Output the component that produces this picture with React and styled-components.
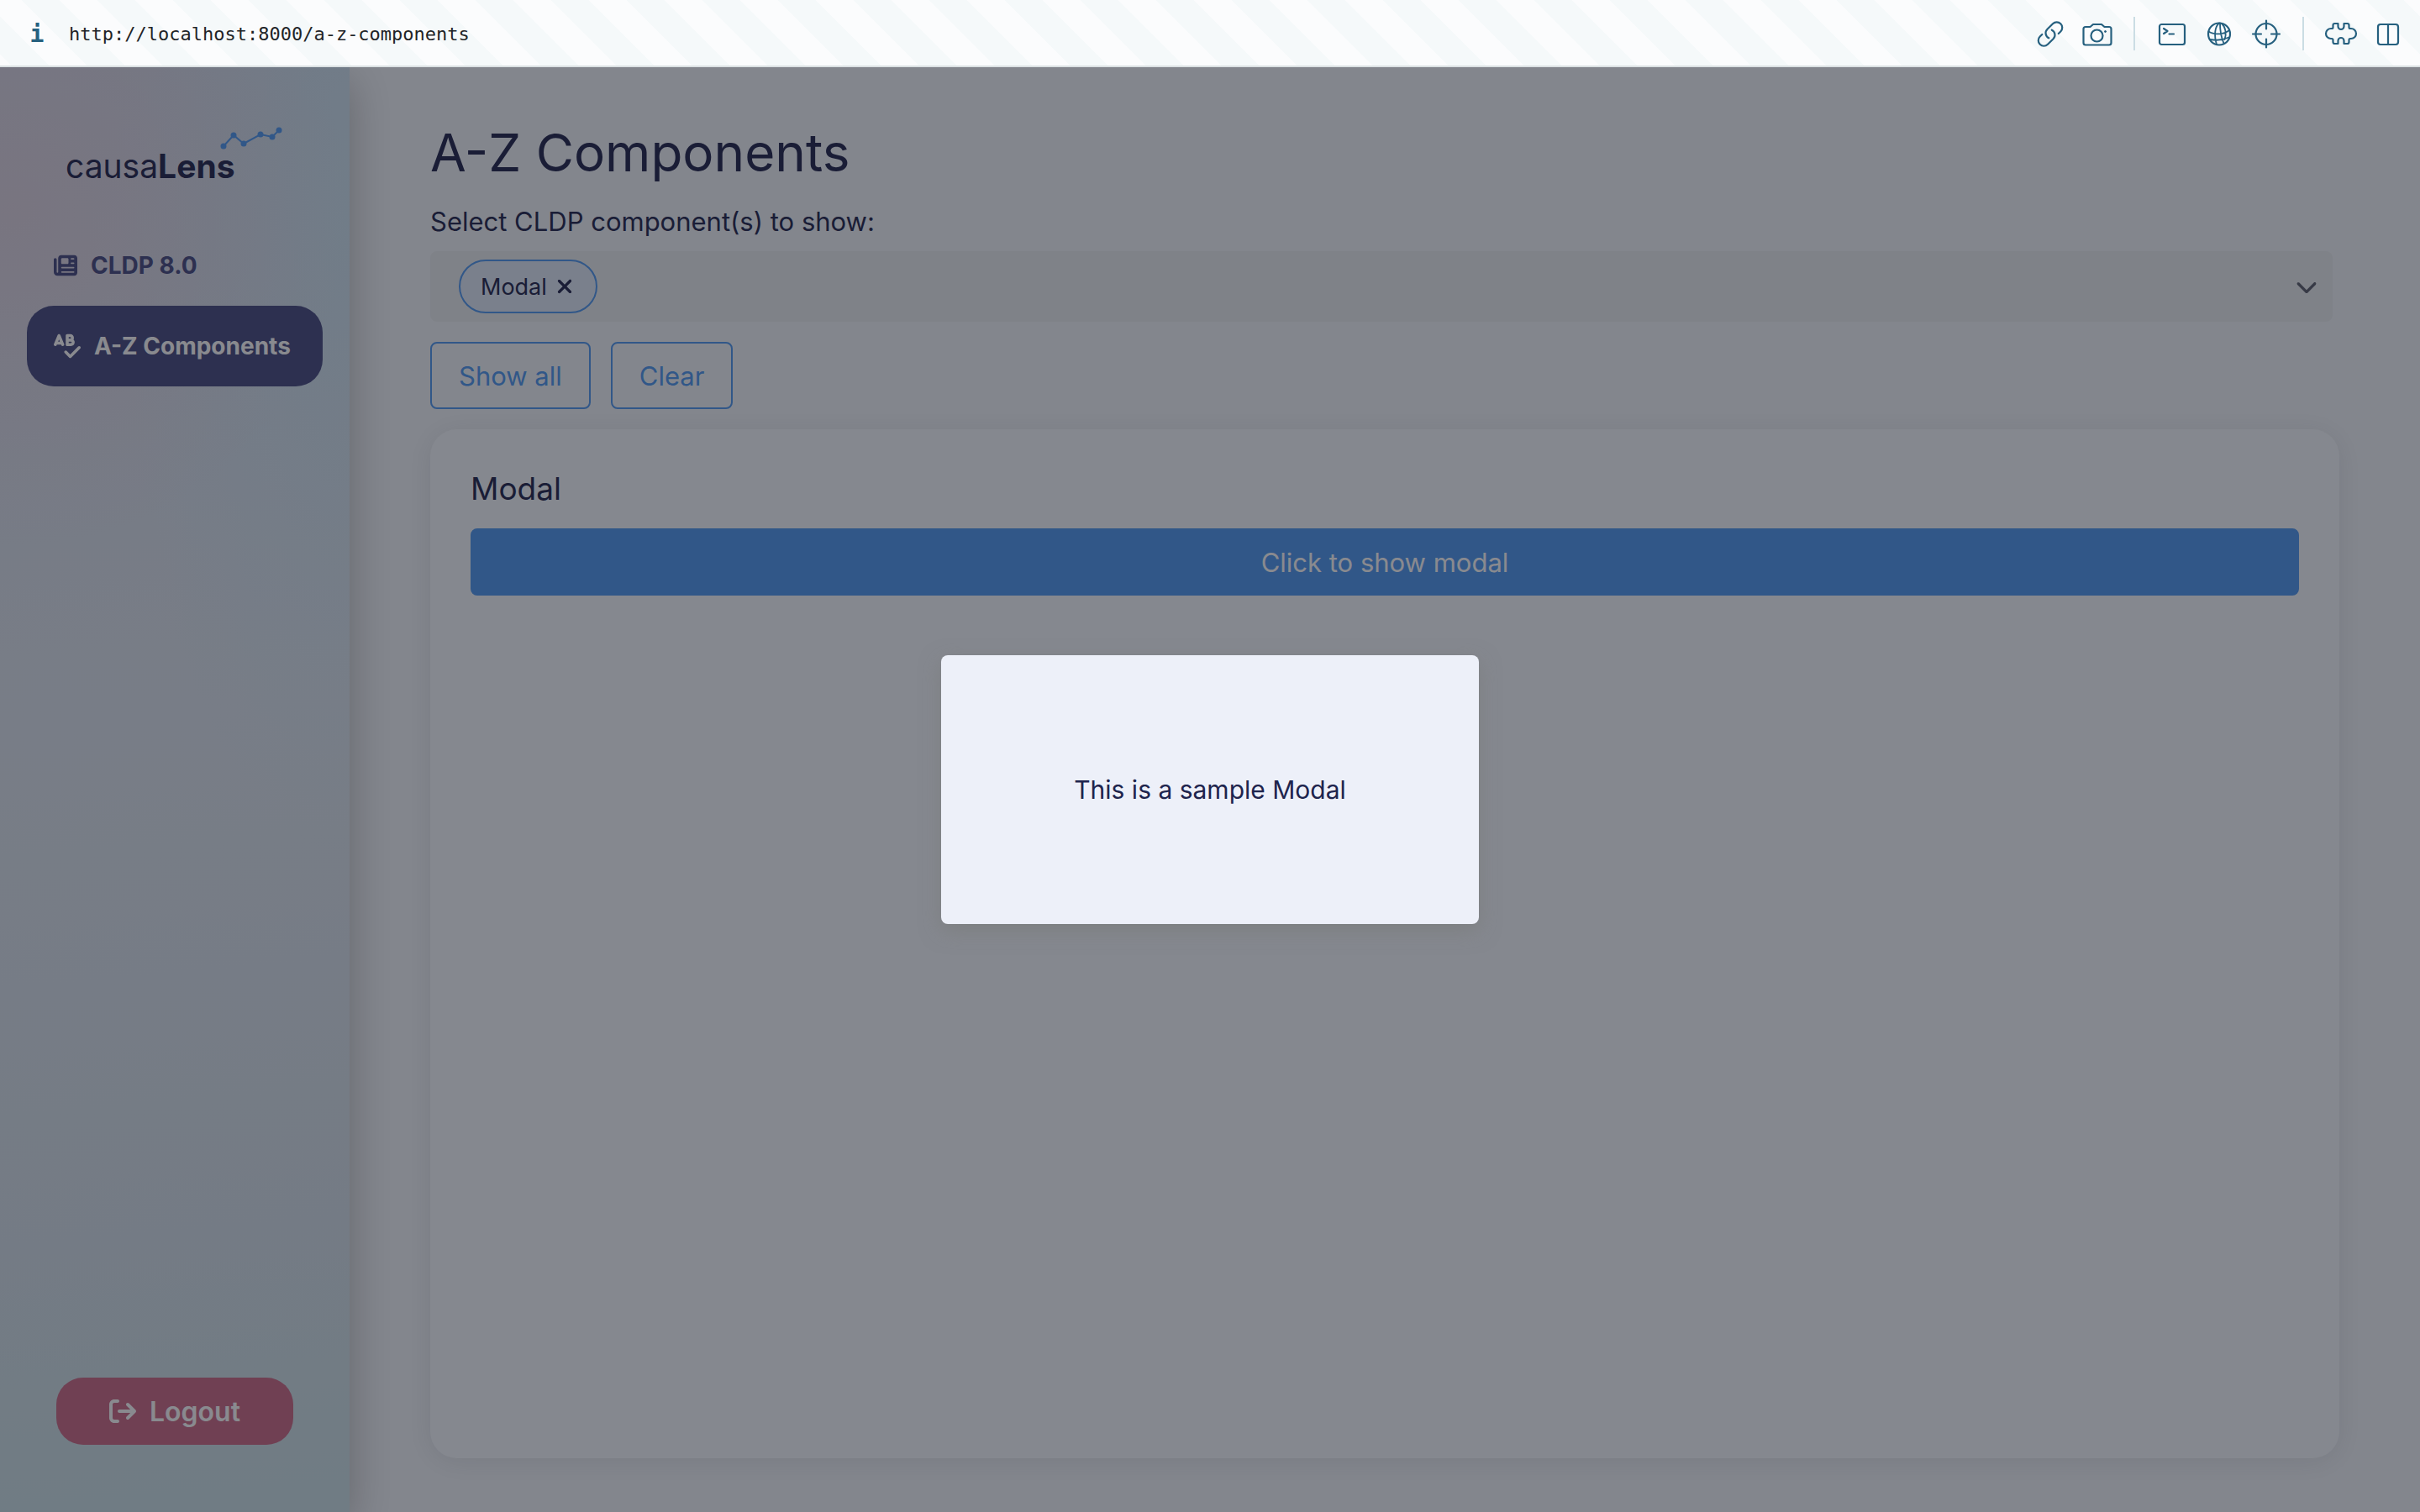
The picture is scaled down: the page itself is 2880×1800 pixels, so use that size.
import React from 'react';
import styled, { createGlobalStyle } from 'styled-components';
import {
  FaArrowRightFromBracket,
  FaChevronDown,
  FaNewspaper,
  FaSpellCheck,
  FaXmark,
} from 'react-icons/fa6';

const color = {
  text: '#20244c',
  modalText: '#1e244d',
  primary: '#4e98f0',
  secondary: '#464a80',
  error: '#cc6a86',
  white: '#ffffff',
  toolbarInk: '#26607f',
};

const GlobalStyle = createGlobalStyle`
  *, *::before, *::after { box-sizing: border-box; }
  body { margin: 0; }
  body, button, input {
    font-family: Inter, "Liberation Sans", sans-serif;
  }
  h1, h2, p { margin: 0; font-weight: 400; }
`;

const Page = styled.div`
  display: flex;
  flex-direction: column;
  min-height: 100vh;
  color: ${color.text};
`;

const Toolbar = styled.header`
  display: flex;
  align-items: center;
  height: 80px;
  padding: 2px 10px 0 32px;
  border-bottom: 2px solid #dbe1e3;
  background: linear-gradient(45deg, #f5f9fa 25%, #fbfcfd 25% 50%, #f5f9fa 50% 75%, #fbfcfd 75%)
    14px 100% / 90px 90px;
`;

const InfoButton = styled.button`
  width: 24px;
  padding: 2px 0 0;
  border: 0;
  background: none;
  color: ${color.toolbarInk};
  font: 700 28px/32px "DejaVu Sans Mono", monospace;
`;

const Address = styled.span`
  flex: 1;
  margin-left: 26px;
  padding-top: 2px;
  color: #1f2427;
  font: 22px/32px "DejaVu Sans Mono", monospace;
`;

const ToolButton = styled.button`
  display: flex;
  align-items: center;
  justify-content: center;
  width: 56px;
  height: 40px;
  padding: 0;
  border: 0;
  background: none;
  color: ${color.toolbarInk};

  svg {
    width: 40px;
    height: 40px;
    fill: none;
    stroke: currentColor;
    stroke-width: 2.2;
    stroke-linecap: round;
    stroke-linejoin: round;
  }
`;

const ToolDivider = styled.span`
  width: 2px;
  height: 40px;
  margin: 0 16px 0 15px;
  background: #cbdde4;
`;

const Workspace = styled.div`
  position: relative;
  display: flex;
  flex: 1;
  overflow: hidden;
  background: #f3f7fb;
`;

const Sidebar = styled.aside`
  z-index: 1;
  display: flex;
  flex-direction: column;
  width: 416px;
  padding: 64px 32px 80px;
  background:
    radial-gradient(circle at 16px 170px, rgba(226, 204, 216, 0.55), rgba(226, 210, 224, 0) 400px),
    radial-gradient(ellipse 280px 800px at 100% 8%, rgba(202, 230, 244, 0.7), rgba(204, 232, 244, 0)),
    linear-gradient(175deg, #d6dcea 0%, #dde5ee 45%, #d5e1ea 80%, #cce3e8 100%);
  box-shadow: 0 16px 48px rgba(50, 47, 45, 0.32);
`;

const Logo = styled.div`
  position: relative;
  padding: 14px 0 0 46px;
  font-size: 39px;
  line-height: 80px;

  svg {
    position: absolute;
    top: 4px;
    left: 228px;
    width: 88px;
    height: 40px;
  }
`;

const Nav = styled.nav`
  display: flex;
  flex-direction: column;
  margin-top: 30px;
`;

const NavLink = styled.a`
  display: flex;
  align-items: center;
  gap: 16px;
  height: 96px;
  padding: 0 32px;
  border-radius: 32px;
  background: ${(p) => (p.$active ? color.secondary : 'transparent')};
  color: ${(p) => (p.$active ? color.white : color.secondary)};
  font-size: 28px;
  font-weight: 700;
  text-decoration: none;
  white-space: nowrap;

  svg { flex: none; }
`;

const LogoutButton = styled.button`
  display: flex;
  align-items: center;
  justify-content: center;
  gap: 16px;
  width: 282px;
  height: 80px;
  margin: auto auto 0;
  border: 0;
  border-radius: 32px;
  background: ${color.error};
  color: ${color.white};
  font-size: 32px;
  font-weight: 600;
`;

const Main = styled.main`
  display: flex;
  flex: 1;
  flex-direction: column;
  padding: 62px 96px 64px;
`;

const Title = styled.h1`
  font-size: 62px;
  line-height: 80px;
`;

const FieldLabel = styled.label`
  margin-top: 18px;
  font-size: 31px;
  line-height: 48px;
`;

const MultiSelect = styled.div`
  display: flex;
  align-items: center;
  height: 84px;
  margin: 11px 8px 0 0;
  padding: 0 18px 0 34px;
  border-radius: 8px;
  background: #ebeef1;
`;

const Chip = styled.span`
  display: flex;
  align-items: center;
  gap: 8px;
  height: 64px;
  padding: 0 24px;
  border: 2px solid ${color.primary};
  border-radius: 32px;
  background: #e1ebf8;
  font-size: 27px;
`;

const IconButton = styled.button`
  display: flex;
  padding: 0;
  border: 0;
  background: none;
  color: ${(p) => (p.$muted ? '#5b5e6c' : color.text)};
`;

const SelectInput = styled.input`
  flex: 1;
  min-width: 0;
  height: 64px;
  border: 0;
  background: none;
  font-size: 27px;
`;

const ButtonRow = styled.div`
  display: flex;
  gap: 24px;
  margin-top: 24px;
`;

const Button = styled.button`
  height: 80px;
  padding: 0 32px;
  border: 2px solid ${color.primary};
  border-radius: 8px;
  background: ${(p) => (p.$filled ? color.primary : 'transparent')};
  color: ${(p) => (p.$filled ? color.white : color.primary)};
  font-size: 31px;
`;

const Card = styled.section`
  display: flex;
  flex: 1;
  flex-direction: column;
  gap: 22px;
  margin-top: 24px;
  padding: 46px 48px;
  border-radius: 32px;
  background: #f7fbfe;
  box-shadow: 0 4px 32px rgba(40, 40, 50, 0.1);
`;

const CardTitle = styled.h2`
  font-size: 37px;
  line-height: 50px;
`;

const Backdrop = styled.div`
  position: absolute;
  inset: 0;
  z-index: 2;
  display: flex;
  align-items: center;
  justify-content: center;
  background: rgba(20, 22, 32, 0.5);
`;

const Dialog = styled.div`
  display: flex;
  align-items: center;
  justify-content: center;
  width: 640px;
  height: 320px;
  border-radius: 8px;
  background: #edf0f9;
  box-shadow: 0 8px 24px rgba(120, 122, 120, 0.6);
  color: ${color.modalText};
  font-size: 30px;
`;

function Tool({ label, children }) {
  return (
    <ToolButton type="button" aria-label={label}>
      <svg viewBox="0 0 40 40">{children}</svg>
    </ToolButton>
  );
}

const points = [[42, 30], [54, 17], [66, 27], [86, 16], [100, 19], [108, 11]];

function LogoChart() {
  return (
    <svg viewBox="36 4 88 40" aria-hidden="true" fill={color.primary} stroke={color.primary}>
      <polyline points={points.map((p) => p.join(',')).join(' ')} fill="none" strokeWidth="2" />
      {points.map(([x, y]) => (
        <circle key={x} cx={x} cy={y} r="3.5" stroke="none" />
      ))}
    </svg>
  );
}

export default function App() {
  return (
    <Page>
      <GlobalStyle />
      <Toolbar>
        <InfoButton type="button" aria-label="Page information">i</InfoButton>
        <Address>http://localhost:8000/a-z-components</Address>
        <Tool label="Copy link">
          <path
            transform="translate(2.5 3) scale(1.46)"
            strokeWidth="1.5"
            d="M13.19 8.688a4.5 4.5 0 0 1 1.242 7.244l-4.5 4.5a4.5 4.5 0 0 1-6.364-6.364l1.757-1.757m13.35-.622 1.757-1.757a4.5 4.5 0 0 0-6.364-6.364l-4.5 4.5a4.5 4.5 0 0 0 1.242 7.244"
          />
        </Tool>
        <Tool label="Screenshot">
          <path d="M6 12h5.500l3.500-3h10l3.500 3H34a2.500 2.500 0 0 1 2.500 2.500V31A2.500 2.500 0 0 1 34 33.500H6A2.500 2.500 0 0 1 3.500 31V14.500A2.500 2.500 0 0 1 6 12z" />
          <circle cx="19.500" cy="22.500" r="7" />
          <circle cx="29.500" cy="17.500" r="1" fill="currentColor" strokeWidth="1" />
        </Tool>
        <ToolDivider />
        <Tool label="Console">
          <rect x="5" y="9" width="30" height="24" rx="2.500" />
          <path d="M10 14l4.500 3-4.500 3M16.500 20.500h5.500" />
        </Tool>
        <Tool label="Network">
          <circle cx="20" cy="20.500" r="13" />
          <path transform="translate(0 .5)" d="M20 7c-5 4-6.500 14-3 25.500M21 7c0 6 0 14 4.500 24M23 7.500c4.500 4 6 12 3.500 19M7.500 17c6 4 18 4 24.500-1.500M9.500 26.500c7 1.500 14 1 22-2.500" strokeWidth="1.800" />
        </Tool>
        <Tool label="Inspect">
          <circle cx="20" cy="20.500" r="12.500" />
          <path d="M20 4.500v10M20 26.500v10M4 20.500h10M26 20.500h10" />
        </Tool>
        <ToolDivider />
        <Tool label="Extensions">
          <path d="M12.500 8H16.500V11.500a3.500 3.500 0 0 0 7 0V8H27.500a2 2 0 0 1 2 2V12.500c0 1 .5 1.500 1.500 1.500h1a6 6 0 0 1 0 12h-1c-1 0-1.500.5-1.500 1.500V30a2 2 0 0 1-2 2H23.500V28.500a3.500 3.500 0 0 0-7 0V32H12.500a2 2 0 0 1-2-2V27.500c0-1-.5-1.500-1.500-1.500H8a6 6 0 0 1 0-12h1c1 0 1.500-.5 1.500-1.500V10a2 2 0 0 1 2-2z" />
        </Tool>
        <Tool label="Split view">
          <rect x="8" y="9" width="24" height="24" rx="3" />
          <path d="M20 9v24" />
        </Tool>
      </Toolbar>
      <Workspace>
        <Sidebar>
          <Logo>
            causa<b>Lens</b>
            <LogoChart />
          </Logo>
          <Nav>
            <NavLink href="#cldp"><FaNewspaper size={28} />CLDP 8.0</NavLink>
            <NavLink href="#components" $active><FaSpellCheck size={32} />A-Z Components</NavLink>
          </Nav>
          <LogoutButton type="button"><FaArrowRightFromBracket size={32} />Logout</LogoutButton>
        </Sidebar>
        <Main>
          <Title>A-Z Components</Title>
          <FieldLabel htmlFor="components">Select CLDP component(s) to show:</FieldLabel>
          <MultiSelect>
            <Chip>
              Modal
              <IconButton type="button" aria-label="Remove Modal"><FaXmark size={26} /></IconButton>
            </Chip>
            <SelectInput id="components" role="combobox" aria-expanded="false" />
            <IconButton type="button" $muted aria-label="Open list"><FaChevronDown size={26} /></IconButton>
          </MultiSelect>
          <ButtonRow>
            <Button type="button">Show all</Button>
            <Button type="button">Clear</Button>
          </ButtonRow>
          <Card>
            <CardTitle>Modal</CardTitle>
            <Button type="button" $filled>Click to show modal</Button>
          </Card>
        </Main>
        <Backdrop>
          <Dialog role="dialog" aria-modal="true"><p>This is a sample Modal</p></Dialog>
        </Backdrop>
      </Workspace>
    </Page>
  );
}
